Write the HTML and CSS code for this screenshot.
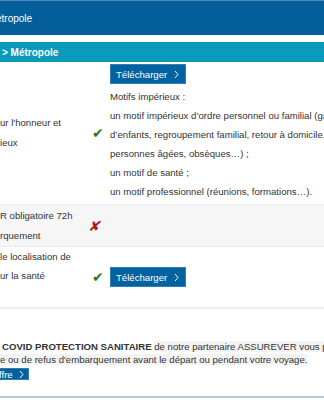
FILE: index.html
```html
<!DOCTYPE html>
<html lang="fr">
<head>
  <meta charset="UTF-8" />
  <meta name="viewport" content="width=device-width, initial-scale=1.0" />
  <title>Documents de voyage - Métropole</title>
  <link rel="stylesheet" href="styles.css">
</head>
<body>

<header class="topbar">
  <span class="topbar-title">étropole</span>
</header>

<div class="crumb">&gt; Métropole</div>

<div class="docs">
  <div class="doc-row first">
    <div class="doc-name">ur l'honneur et<br>ieux</div>
    <div class="doc-status ok">✔</div>
    <div class="doc-info">
      <a class="btn" href="#">Télécharger <svg width="5" height="9" viewBox="0 0 5 9"><polyline points="1,1 4,4.5 1,8" fill="none" stroke="#fff" stroke-width="1"/></svg></a>
      <p>Motifs impérieux :</p>
      <p>un motif impérieux d’ordre personnel ou familial (garde<br>d’enfants, regroupement familial, retour à domicile,<br>personnes âgées, obsèques…) ;</p>
      <p>un motif de santé ;</p>
      <p>un motif professionnel (réunions, formations…).</p>
    </div>
  </div>

  <div class="doc-row second">
    <div class="doc-name">R obligatoire 72h<br>rquement</div>
    <div class="doc-status ko">✘</div>
    <div class="doc-info"></div>
  </div>

  <div class="doc-row third">
    <div class="doc-name">le localisation de<br>ur la santé</div>
    <div class="doc-status ok">✔</div>
    <div class="doc-info">
      <a class="btn" href="#">Télécharger <svg width="5" height="9" viewBox="0 0 5 9"><polyline points="1,1 4,4.5 1,8" fill="none" stroke="#fff" stroke-width="1"/></svg></a>
    </div>
  </div>
</div>

<div class="promo">
  <p class="promo-line"><b>COVID PROTECTION SANITAIRE</b> <span class="hl">de notre partenaire ASSUREVER vous protège en cas de maladie</span></p>
  <p class="promo-line"><span class="hl">e ou de refus d'embarquement avant le départ ou pendant votre voyage.</span></p>
  <a class="btn small" href="#">ffre <svg width="5" height="9" viewBox="0 0 5 9"><polyline points="1,1 4,4.5 1,8" fill="none" stroke="#fff" stroke-width="1"/></svg></a>
</div>

<div class="bottom-line"></div>

</body>
</html>
```

FILE: styles.css
```css
body { margin: 0; overflow: hidden; background: #fff; color: #333; font-family: "Liberation Sans", Arial, sans-serif; font-size: 9.6px; }
.topbar { background: #035e9a; border-top: 1px solid #4a8bbb; height: 34px; display: flex; align-items: center; color: #fff; font-size: 10px; }
.topbar-title { margin-left: -4px; white-space: nowrap; }
.crumb { margin-top: 7px; background: #0a9abb; height: 20px; display: flex; align-items: center; padding-left: 2px; color: #fff; font-weight: bold; font-size: 10px; }
.docs { width: 600px; }
.doc-row { display: grid; grid-template-columns: 85px 25px 1fr; }
.doc-name { line-height: 20px; white-space: nowrap; }
.doc-status { font-size: 14px; line-height: 20px; text-align: center; }
.ok { color: #1a7f1a; }
.ko { color: #b3141c; font-style: italic; text-align: left; padding-left: 3px; }
.doc-info p { margin: 0; line-height: 19px; white-space: nowrap; }
.btn { display: inline-flex; align-items: center; gap: 7px; box-sizing: border-box; height: 20px; padding: 0 6px 0 5px; background: #0063a0; border: 1px solid #2f7fb5; color: #fff; text-decoration: none; font-size: 9.6px; }
.first { padding: 2px 0 3px; }
.first .doc-name, .first .doc-status { align-self: center; }
.first .btn { margin-bottom: 3px; }
.second { background: #f6f6f6; border-top: 1px solid #ececec; border-bottom: 1px solid #ececec; height: 41px; }
.second .doc-name { padding-top: 1px; }
.second .doc-status { padding-top: 11px; }
.third { height: 60px; border-bottom: 2px solid #eeeeee; }
.third .doc-name { line-height: 19px; }
.third .doc-status, .third .doc-info { padding-top: 20px; }
.promo { padding-top: 32px; height: 55px; }
.promo-line { margin: 0; line-height: 12.5px; white-space: nowrap; }
.promo-line b { margin-left: 2px; }
.hl { background: #f3f3f3; }
.btn.small { height: 12px; margin-top: 2px; margin-left: -2px; padding: 0 4px 0 0; gap: 6px; }
.bottom-line { border-top: 2px solid #b9cad9; }
```
